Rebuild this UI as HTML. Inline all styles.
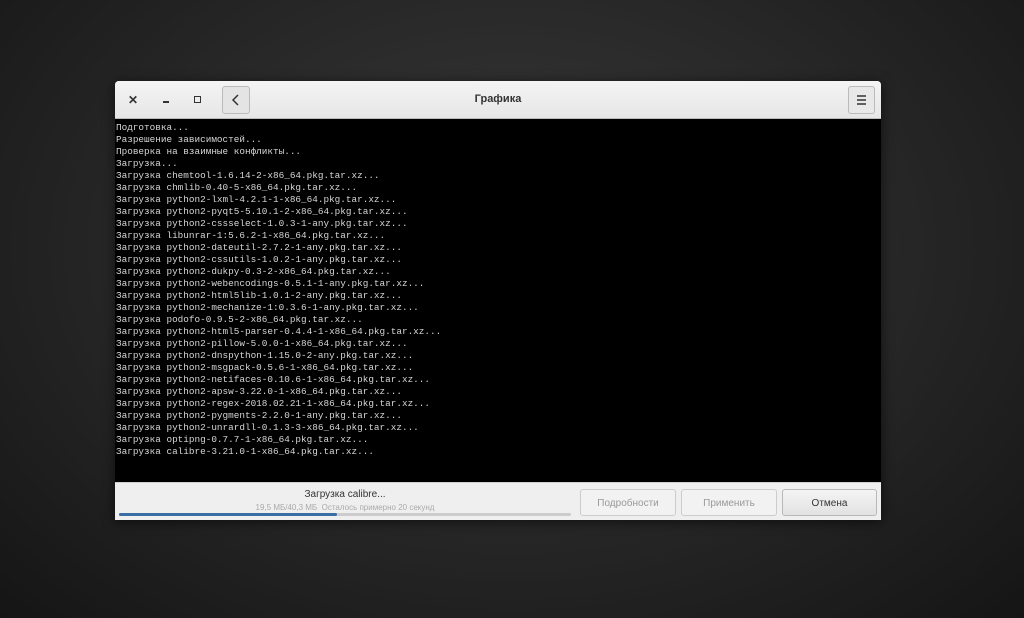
<!DOCTYPE html><html><head><meta charset="utf-8"><style>
body{margin:0;width:1024px;height:618px;overflow:hidden;background:radial-gradient(ellipse at 50% 40%,#3a3a3a 0%,#262626 55%,#151515 100%);font-family:"Liberation Sans",sans-serif;position:relative}
.win{position:absolute;left:115px;top:81px;width:766px;height:439px;background:#ededed;border-radius:4px 4px 0 0;overflow:hidden;box-shadow:0 2px 12px rgba(0,0,0,.6)}
.tb{height:37px;background:linear-gradient(#f4f4f4,#e6e6e6);border-bottom:1px solid #bbb;position:relative}
.ic{position:absolute;top:12px;font-size:12px;color:#333;font-weight:bold}
.back{position:absolute;left:107px;top:5px;width:26px;height:26px;border:1px solid #bbb;border-radius:3px;background:#e4e4e4}
.menu{position:absolute;right:6px;top:5px;width:25px;height:26px;border:1px solid #bbb;border-radius:3px;background:#e8e8e8}
.title{position:absolute;left:0;right:0;top:12px;text-align:center;font-size:11px;font-weight:bold;color:#333}
.term{position:absolute;top:38px;left:0;right:0;height:363px;background:#000;color:#d6d6d6;font-family:"Liberation Mono",monospace;font-size:9.35px;line-height:12px;padding:3px 0 0 1px;white-space:pre;box-sizing:border-box}
.bot{position:absolute;top:401px;left:0;right:0;height:38px;background:#efefef;border-top:1px solid #d0d0d0}
.btn{position:absolute;top:6px;height:27px;border:1px solid #ccc;border-radius:3px;background:#f2f2f2;font-size:10px;color:#999;text-align:center;line-height:27px;box-sizing:border-box}
</style></head><body>
<div class="win">
<div class="tb">
<div class="ic" style="left:13px">✕</div>
<div style="position:absolute;left:48px;top:20px;width:6px;height:2px;background:#333"></div>
<div style="position:absolute;left:79px;top:15px;width:5px;height:5px;border:1.5px solid #333"></div>
<div class="back"><svg width="26" height="26"><path d="M15 8 L10 13 L15 18" stroke="#333" stroke-width="1.5" fill="none"/></svg></div>
<div class="title">Графика</div>
<div class="menu"><svg width="25" height="26"><path d="M8 9h9M8 13h9M8 17h9" stroke="#333" stroke-width="1.5"/></svg></div>
</div>
<div class="term">Подготовка...
Разрешение зависимостей...
Проверка на взаимные конфликты...
Загрузка...
Загрузка chemtool-1.6.14-2-x86_64.pkg.tar.xz...
Загрузка chmlib-0.40-5-x86_64.pkg.tar.xz...
Загрузка python2-lxml-4.2.1-1-x86_64.pkg.tar.xz...
Загрузка python2-pyqt5-5.10.1-2-x86_64.pkg.tar.xz...
Загрузка python2-cssselect-1.0.3-1-any.pkg.tar.xz...
Загрузка libunrar-1:5.6.2-1-x86_64.pkg.tar.xz...
Загрузка python2-dateutil-2.7.2-1-any.pkg.tar.xz...
Загрузка python2-cssutils-1.0.2-1-any.pkg.tar.xz...
Загрузка python2-dukpy-0.3-2-x86_64.pkg.tar.xz...
Загрузка python2-webencodings-0.5.1-1-any.pkg.tar.xz...
Загрузка python2-html5lib-1.0.1-2-any.pkg.tar.xz...
Загрузка python2-mechanize-1:0.3.6-1-any.pkg.tar.xz...
Загрузка podofo-0.9.5-2-x86_64.pkg.tar.xz...
Загрузка python2-html5-parser-0.4.4-1-x86_64.pkg.tar.xz...
Загрузка python2-pillow-5.0.0-1-x86_64.pkg.tar.xz...
Загрузка python2-dnspython-1.15.0-2-any.pkg.tar.xz...
Загрузка python2-msgpack-0.5.6-1-x86_64.pkg.tar.xz...
Загрузка python2-netifaces-0.10.6-1-x86_64.pkg.tar.xz...
Загрузка python2-apsw-3.22.0-1-x86_64.pkg.tar.xz...
Загрузка python2-regex-2018.02.21-1-x86_64.pkg.tar.xz...
Загрузка python2-pygments-2.2.0-1-any.pkg.tar.xz...
Загрузка python2-unrardll-0.1.3-3-x86_64.pkg.tar.xz...
Загрузка optipng-0.7.7-1-x86_64.pkg.tar.xz...
Загрузка calibre-3.21.0-1-x86_64.pkg.tar.xz...</div>
<div class="bot">
<div style="position:absolute;left:0;width:460px;top:6px;text-align:center;font-size:10px;color:#333">Загрузка calibre...</div>
<div style="position:absolute;left:0;width:460px;top:20px;text-align:center;font-size:8px;color:#aaa">19,5 МБ/40,3 МБ &nbsp;Осталось примерно 20 секунд</div>
<div style="position:absolute;left:4px;top:30px;width:452px;height:3px;background:#ccc;border-radius:2px"><div style="width:218px;height:3px;background:#3a6ea5;border-radius:2px"></div></div>
<div class="btn" style="left:465px;width:96px">Подробности</div>
<div class="btn" style="left:566px;width:96px">Применить</div>
<div class="btn" style="left:667px;width:95px;color:#333;background:linear-gradient(#f4f4f4,#e2e2e2);border-color:#b8b8b8">Отмена</div>
</div>
</div>
</body></html>
